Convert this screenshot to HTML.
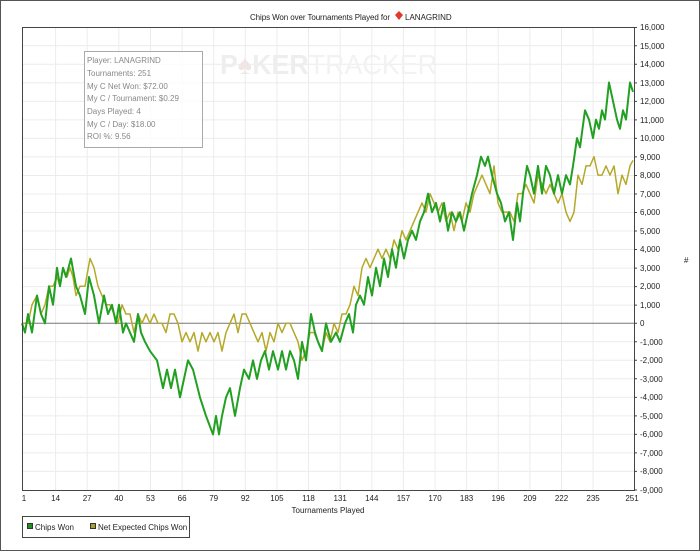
<!DOCTYPE html>
<html><head><style>
body{margin:0;background:#fff;width:700px;height:551px;overflow:hidden;font-family:"Liberation Sans",sans-serif}
</style></head><body>
<svg width="700" height="551" xmlns="http://www.w3.org/2000/svg" font-family="Liberation Sans, sans-serif">
<rect x="0.5" y="0.5" width="699" height="550" fill="#fff" stroke="#555"/>
<text x="390" y="20" font-size="8" text-anchor="end" fill="#222" textLength="140">Chips Won over Tournaments Played for</text>
<path d="M399 11 l4 4 l-4 5 l-4 -5z" fill="#e03a2a"/>
<text x="405" y="20" font-size="8" fill="#222">LANAGRIND</text>
<g stroke="#ececec" stroke-width="1">
<path d="M22 45.8H634M22 64.3H634M22 82.9H634M22 101.4H634M22 119.9H634M22 138.4H634M22 156.9H634M22 175.5H634M22 194H634M22 212.5H634M22 231H634M22 249.5H634M22 268.1H634M22 286.6H634M22 305.1H634M22 341.8H634M22 360.3H634M22 378.8H634M22 397.4H634M22 415.9H634M22 434.4H634M22 452.9H634M22 471.4H634"/>
<path d="M55.6 27V490M87.2 27V490M118.8 27V490M150.5 27V490M182.1 27V490M213.7 27V490M245.3 27V490M276.9 27V490M308.5 27V490M340.2 27V490M371.8 27V490M403.4 27V490M435 27V490M466.6 27V490M498.2 27V490M529.9 27V490M561.5 27V490M593.1 27V490"/>
</g>
<text x="220" y="74" font-size="28" font-weight="bold" fill="#eeeeee" textLength="217" lengthAdjust="spacingAndGlyphs">P<tspan fill="#f0e6e6">♠</tspan>KER<tspan font-weight="normal" fill="#f2f2f2">TRACKER</tspan></text>
<rect x="84.5" y="51.5" width="118" height="96" fill="#fff" fill-opacity="0.8" stroke="#aaa"/>
<g font-size="8" fill="#888">
<text x="87" y="63">Player: LANAGRIND</text>
<text x="87" y="76">Tournaments: 251</text>
<text x="87" y="89">My C Net Won: $72.00</text>
<text x="87" y="101">My C / Tournament: $0.29</text>
<text x="87" y="114">Days Played: 4</text>
<text x="87" y="127">My C / Day: $18.00</text>
<text x="87" y="139">ROI %: 9.56</text>
</g>
<line x1="22" y1="323.3" x2="634" y2="323.3" stroke="#777" stroke-width="1"/>
<g transform="translate(0,323.3) scale(1,-18.52)" fill="none" stroke-linejoin="round">
<polyline vector-effect="non-scaling-stroke" stroke="#b5a82a" stroke-width="1.5" points="22,0 28,0 32,1 37,1.5 41,0.5 45,1 49,2 53,2 57,2.5 60,2 63,3 67,2.5 70,3 73,2.5 76,1.5 80,2 85,2 90,3.5 94,3 98,2 102,1.5 106,1 110,1 114,0.5 118,0 122,1 126,0.5 130,0.5 134,-0.5 138,0.5 142,0 146,0.5 150,0 154,0.5 158,0 162,0 166,-0.5 170,0.5 174,0.5 178,0 182,-1 186,-0.5 190,-1 194,-0.5 198,-1.5 202,-0.5 206,-1 210,-0.5 214,-1 218,-0.5 222,-1.5 226,-0.5 230,0 234,0.5 238,-0.5 242,0.5 246,0.5 250,0 254,-0.5 258,-1 262,-0.5 266,-1.5 270,-0.5 274,-1 278,0 282,-0.5 286,0 290,0 294,-0.5 298,-1 302,-2 306,-1.5 310,-0.5 314,-0.5 318,-1 322,-1.5 326,-0.5 330,-1 334,0 338,-0.5 342,0.5 346,0.5 350,1 354,2 358,1.5 362,3 366,3.5 370,3 374,3.5 378,4 382,3.5 386,4 390,3.5 394,4.5 398,4 402,5 406,4.5 410,5 414,5.5 418,6 422,6.5 426,6 430,7 434,6.5 438,6 442,6.5 446,5.5 450,6 454,5 458,6 462,5.5 466,6.5 470,6 474,7 478,7.5 482,8 486,7.5 490,7 494,8.5 498,6.5 502,6 506,6 510,6 514,5.5 518,7 522,7 526,7.5 530,7 534,6.5 538,8 542,7.5 546,7 550,7.5 554,7 558,6.5 562,7 566,6 570,5.5 574,6 578,8 582,7.5 586,8.5 590,8.5 594,9 598,8 602,8 606,8.5 610,8 614,8.5 618,7 622,8 626,7.5 630,8.5 633,8.8"/>
<polyline vector-effect="non-scaling-stroke" stroke="#22a022" stroke-width="2" points="22,0 25,-0.5 28,0.5 32,-0.5 37,1.5 41,0.5 45,0 49,2 53,1 57,3 60,2 63,3 66,2.5 71,3.5 76,2 80,1.5 85,0.5 89,2.5 94,1.5 99,0 104,1.5 108,0.5 112,1 116,0 119,1 123,-0.5 126,0 130,-0.5 134,-1 138,0.5 141,-0.5 145,-1 150,-1.5 157,-2 163,-3.5 167,-2.5 171,-3.5 175,-2.5 180,-4 184,-3 188,-2 193,-2.5 200,-4 206,-5 213,-6 216,-5 219,-6 222,-5 226,-4 230,-3.5 235,-5 240,-3.5 244,-2.5 249,-3 253,-2 257,-3 261,-2 265,-1.5 269,-2.5 273,-1.5 278,-2.5 282,-1.5 286,-2.5 290,-1.5 294,-2 298,-3 302,-1 306,-2 311,0.5 315,-0.5 318,-1 322,-1.5 326,0 331,-1 336,-0.5 340,-1 345,0 349,0.5 353,-0.5 356,1 360,1.5 364,1 368,2.5 372,1.5 376,3 380,2 384,3.5 388,2.5 392,4 396,3 400,4.5 404,3.5 408,4.5 412,5 416,4.5 420,5.5 424,6 428,7 432,6 436,6.5 440,5.5 444,6.5 448,5 452,6 456,5.5 460,6 464,5 468,6 472,7 477,8 481,9 485,8.5 488,9 492,8 497,7 501,6.5 505,5.5 509,6 513,4.5 517,6.5 520,5.5 523,7 527,8.5 530,8 534,7 538,8.5 542,7 546,8.5 550,8 554,7 558,8 562,7 566,8 570,7.5 573,8.5 577,10 580,9.5 585,11.5 589,11 593,10 596,11 599,10.5 602,11.5 605,11 609,13 613,12 617,11 620,10.5 623,11.5 626,11 630,13 633,12.5"/>
</g>
<path d="M22.5 27V490.5H634.5V27M22 27.5H634" fill="none" stroke="#444"/>
<g stroke="#444"><path d="M634 27.5h3M634 45.8h3M634 64.3h3M634 82.9h3M634 101.4h3M634 119.9h3M634 138.4h3M634 156.9h3M634 175.5h3M634 194h3M634 212.5h3M634 231h3M634 249.5h3M634 268.1h3M634 286.6h3M634 305.1h3M634 323.3h3M634 341.8h3M634 360.3h3M634 378.8h3M634 397.4h3M634 415.9h3M634 434.4h3M634 452.9h3M634 471.4h3M634 490h3"/></g>
<g font-size="8" fill="#222">
<text x="640" y="30">16,000</text><text x="640" y="49">15,000</text><text x="640" y="67">14,000</text><text x="640" y="86">13,000</text><text x="640" y="104">12,000</text><text x="640" y="123">11,000</text><text x="640" y="141">10,000</text><text x="640" y="160">9,000</text><text x="640" y="178">8,000</text><text x="640" y="197">7,000</text><text x="640" y="215">6,000</text><text x="640" y="234">5,000</text><text x="640" y="252">4,000</text><text x="640" y="271">3,000</text><text x="640" y="289">2,000</text><text x="640" y="308">1,000</text><text x="640" y="326">0</text><text x="640" y="345">-1,000</text><text x="640" y="363">-2,000</text><text x="640" y="382">-3,000</text><text x="640" y="400">-4,000</text><text x="640" y="419">-5,000</text><text x="640" y="437">-6,000</text><text x="640" y="456">-7,000</text><text x="640" y="474">-8,000</text><text x="640" y="493">-9,000</text>
<text x="684" y="263">#</text>
</g>
<g font-size="8" fill="#222" text-anchor="middle">
<text x="24" y="501">1</text><text x="55.6" y="501">14</text><text x="87.2" y="501">27</text><text x="118.8" y="501">40</text><text x="150.5" y="501">53</text><text x="182.1" y="501">66</text><text x="213.7" y="501">79</text><text x="245.3" y="501">92</text><text x="276.9" y="501">105</text><text x="308.5" y="501">118</text><text x="340.2" y="501">131</text><text x="371.8" y="501">144</text><text x="403.4" y="501">157</text><text x="435" y="501">170</text><text x="466.6" y="501">183</text><text x="498.2" y="501">196</text><text x="529.9" y="501">209</text><text x="561.5" y="501">222</text><text x="593.1" y="501">235</text><text x="632" y="501">251</text>
<text x="328" y="513">Tournaments Played</text>
</g>
<rect x="22.5" y="516.5" width="167" height="21" fill="#fff" stroke="#444"/>
<rect x="27.5" y="523.5" width="5" height="5" fill="#229022" stroke="#333"/>
<text x="35" y="530" font-size="8" fill="#222">Chips Won</text>
<rect x="90.5" y="523.5" width="5" height="5" fill="#a8a030" stroke="#333"/>
<text x="98" y="530" font-size="8" fill="#222">Net Expected Chips Won</text>
</svg>
</body></html>
